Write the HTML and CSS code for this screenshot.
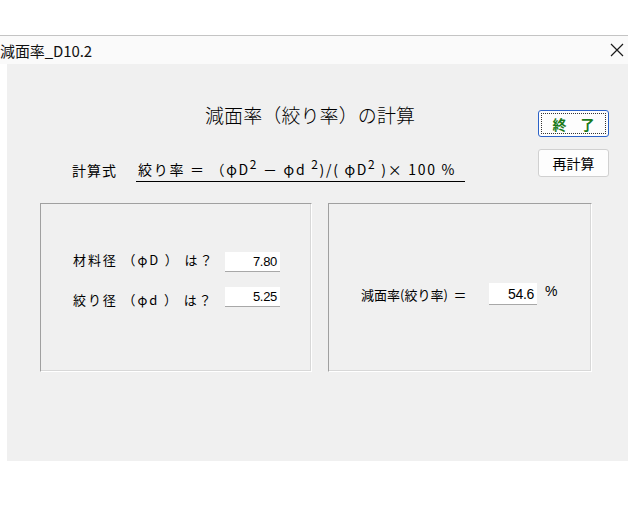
FILE: index.html
```html
<!DOCTYPE html>
<html lang="ja">
<head>
<meta charset="utf-8">
<title>減面率_D10.2</title>
<link rel="stylesheet" href="styles.css">
</head>
<body>
<div class="window">
  <div class="titlebar">
    <span class="title">減面率_D10.2</span>
    <span class="close">
      <svg width="14" height="14" viewBox="0 0 14 14"><path d="M1 1 L13 13 M13 1 L1 13" stroke="#1a1a1a" stroke-width="1.2" fill="none"/></svg>
    </span>
  </div>
  <div class="client">
    <div class="top">
      <div class="main">
        <h1 class="heading">減面率（絞り率）の計算</h1>
        <div class="formula-row">
          <span class="formula-label">計算式</span>
          <span class="formula">絞り率 ＝ （φD<sup>2</sup> － φd <sup>2</sup>)/( φD<sup>2</sup> )× 100 %</span>
        </div>
      </div>
      <div class="side">
        <button class="btn btn-end"><span class="focus">終　了</span></button>
        <button class="btn">再計算</button>
      </div>
    </div>
    <div class="panels">
      <div class="panel panel-left">
        <div class="field">
          <span class="label up">材料径 （φD ） は？</span>
          <span class="input w55">7.80</span>
        </div>
        <div class="field">
          <span class="label down">絞り径 （φd ） は？</span>
          <span class="input w55">5.25</span>
        </div>
      </div>
      <div class="panel panel-right">
        <div class="field">
          <span class="label2">減面率(絞り率)&nbsp; ＝</span>
          <span class="input w48 tall">54.6</span>
          <span class="pct">%</span>
        </div>
      </div>
    </div>
  </div>
</div>
</body>
</html>
```

FILE: styles.css
```css
* { box-sizing: border-box; }
html, body { margin: 0; padding: 0; background: #ffffff; }
body {
  width: 640px;
  height: 512px;
  overflow: hidden;
  font-family: "Noto Sans CJK JP", "Noto Sans", sans-serif;
  color: #000;
}
.window {
  margin-top: 35px;
  width: 628px;
  border-top: 1px solid #c4c4c4;
}
.titlebar {
  height: 28px;
  background: #fafafa;
  display: flex;
  align-items: center;
  justify-content: space-between;
  overflow: hidden;
}
.title {
  font-size: 15px;
  color: #111;
  letter-spacing: -0.1px;
}
.close {
  display: flex;
  margin-right: 4px;
}
.client {
  margin-left: 7px;
  width: 621px;
  height: 397px;
  background: #f0f0f0;
}
.top {
  display: flex;
  height: 139px;
}
.main {
  width: 531px;
}
.heading {
  margin: 38px 0 0 198px;
  font-size: 19px;
  font-weight: 300;
  line-height: 26px;
  letter-spacing: 0.1px;
}
.formula-row {
  margin: 32px 0 0 65px;
  display: flex;
  align-items: flex-end;
  font-size: 14px;
  line-height: 19px;
}
.formula-label {
  width: 64px;
  padding-bottom: 2px;
  letter-spacing: 1px;
}
.formula {
  border-bottom: 1px solid #000;
  padding: 0 9px 2px 2px;
  letter-spacing: 1.7px;
}
.formula sup {
  font-size: 12px;
  line-height: 0;
  vertical-align: 6px;
}
.side {
  display: flex;
  flex-direction: column;
  gap: 12px;
  margin-top: 46px;
}
.btn {
  width: 71px;
  height: 28px;
  background: #fdfdfd;
  border: 1px solid #d0d0d0;
  border-radius: 3px;
  font-family: inherit;
  font-size: 14px;
  padding: 0;
  color: #000;
}
.btn-end {
  height: 27px;
  border: 1px solid #2b62c8;
  padding: 2px;
  font-weight: 700;
  color: #1a7a1a;
}
.focus {
  display: flex;
  align-items: center;
  justify-content: center;
  height: 100%;
  border: 1px dotted #333;
}
.panels {
  display: flex;
  gap: 16px;
  margin-left: 33px;
}
.panel {
  height: 169px;
  border-top: 1px solid #a0a0a0;
  border-left: 1px solid #a0a0a0;
  border-right: 1px solid #ffffff;
  border-bottom: 1px solid #ffffff;
  box-shadow: inset -1px -1px 0 #d8d8d8;
}
.panel-left {
  width: 272px;
  padding: 48px 0 0 32px;
  display: flex;
  flex-direction: column;
  gap: 12px;
}
.panel-right {
  width: 264px;
  padding: 79px 0 0 32px;
}
.field {
  display: flex;
  align-items: center;
  font-size: 13px;
}
.label {
  width: 152px;
  letter-spacing: 1.9px;
}
.up { margin-top: -5px; }
.down { margin-top: 6px; }
.label2 {
  width: 128px;
}
.input {
  height: 20px;
  background: #fff;
  border-bottom: 1px solid #a8a8a8;
  text-align: right;
  font-family: "Liberation Sans", Arial, sans-serif;
  font-size: 13px;
  line-height: 20px;
  padding-right: 3px;
  letter-spacing: -0.3px;
}
.w55 { width: 55px; }
.w48 { width: 48px; }
.tall { height: 22px; line-height: 22px; font-size: 14px; }
.pct {
  margin-left: 8px;
  margin-top: -6px;
  font-family: "Liberation Sans", Arial, sans-serif;
  font-size: 14px;
}
```
